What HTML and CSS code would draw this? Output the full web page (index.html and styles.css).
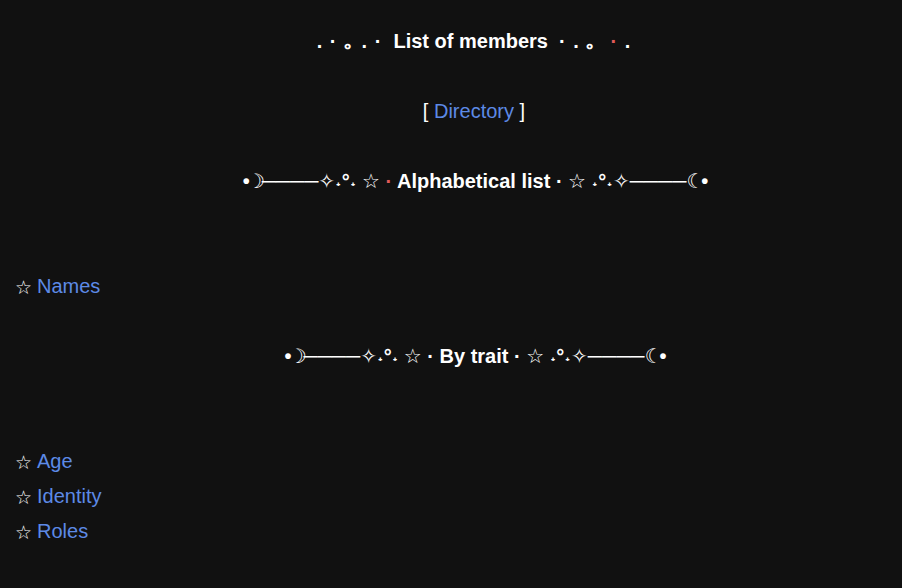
FILE: index.html
```html
<!DOCTYPE html>
<html>
<head>
<meta charset="utf-8">
<link rel="stylesheet" href="styles.css">
</head>
<body>
<main class="page">
  <h1 class="title"><span class="sparkle">. · ｡ . ·</span>&nbsp; List of members &nbsp;<span class="sparkle">· . ｡&nbsp; <span class="red">·</span> .</span></h1>
  <p class="dir">[ <a href="#">Directory</a> ]</p>
  <h2 class="divider"><span class="tight">•☽</span>────✧˖°˖ ☆ <span class="red">·</span> Alphabetical list · ☆ ˖°˖✧────<span class="tight">☾•</span></h2>
  <ul class="list first">
    <li><span class="star">☆</span><a href="#">Names</a></li>
  </ul>
  <h2 class="divider"><span class="tight">•☽</span>────✧˖°˖ ☆ · By trait · ☆ ˖°˖✧────<span class="tight">☾•</span></h2>
  <ul class="list second">
    <li><span class="star">☆</span><a href="#">Age</a></li>
    <li><span class="star">☆</span><a href="#">Identity</a></li>
    <li><span class="star">☆</span><a href="#">Roles</a></li>
  </ul>
</main>
</body>
</html>
```
FILE: styles.css
```css
html, body {
  margin: 0;
  padding: 0;
  background: #111111;
}
body {
  color: #ffffff;
  font-family: "Liberation Sans", Arial, "DejaVu Sans", sans-serif;
  font-size: 20px;
  line-height: 35px;
}
.page {
  padding: 24px 16px 0 16px;
}
.title, .divider {
  margin: 0;
  font-size: 20px;
  font-weight: bold;
  text-align: center;
  line-height: 35px;
  padding-left: 46px;
}
.sparkle { letter-spacing: 1px; }
.red { color: #e05a5a; }
.tight { letter-spacing: -3px; }
.dir {
  margin: 35px 0 0 0;
  text-align: center;
  padding-left: 46px;
}
.divider { margin-top: 35px; }
a {
  color: #5d8ae6;
  text-decoration: none;
}
.list {
  list-style: none;
  margin: 0;
  padding: 0;
}
.list li {
  height: 35px;
  display: flex;
  align-items: center;
}
.star {
  display: inline-block;
  width: 22px;
  margin-left: -1px;
  font-size: 19px;
  line-height: 1;
  position: relative;
  top: 1px;
}
.list.first { margin-top: 70px; }
.list.second { margin-top: 70px; }
.list + .divider { margin-top: 35px; }
```
